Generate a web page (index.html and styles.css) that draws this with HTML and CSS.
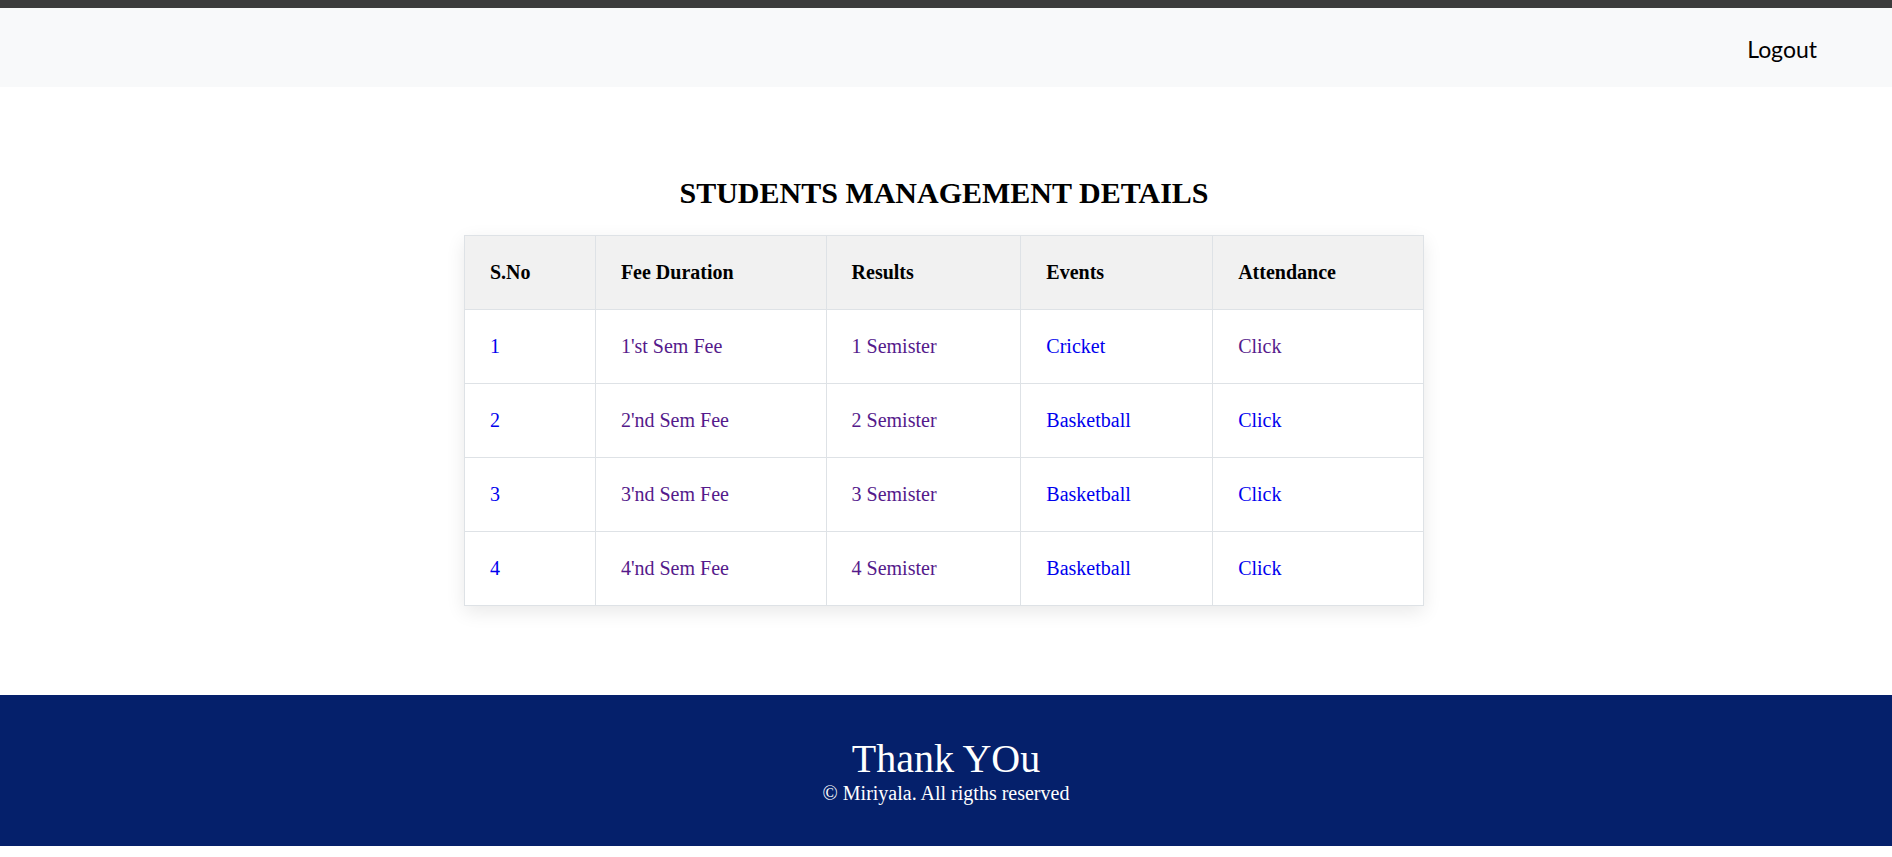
FILE: index.html
```html
<!DOCTYPE html>
<html lang="en">
<head>
<meta charset="utf-8">
<title>Students Management Details</title>
<link rel="stylesheet" href="styles.css">
</head>
<body>
<div class="topbar"></div>
<nav class="navbar">
  <a class="logout" href="#">Logout</a>
</nav>
<main class="content">
  <h2 class="title">STUDENTS MANAGEMENT DETAILS</h2>
  <table class="grid">
    <colgroup>
      <col class="c1"><col class="c2"><col class="c3"><col class="c4"><col class="c5">
    </colgroup>
    <thead>
      <tr><th>S.No</th><th>Fee Duration</th><th>Results</th><th>Events</th><th>Attendance</th></tr>
    </thead>
    <tbody>
      <tr><td><a class="lnk" href="#">1</a></td><td><a class="lnk visited" href="#">1'st Sem Fee</a></td><td><a class="lnk visited" href="#">1 Semister</a></td><td><a class="lnk" href="#">Cricket</a></td><td><a class="lnk visited" href="#">Click</a></td></tr>
      <tr><td><a class="lnk" href="#">2</a></td><td><a class="lnk visited" href="#">2'nd Sem Fee</a></td><td><a class="lnk visited" href="#">2 Semister</a></td><td><a class="lnk" href="#">Basketball</a></td><td><a class="lnk" href="#">Click</a></td></tr>
      <tr><td><a class="lnk" href="#">3</a></td><td><a class="lnk visited" href="#">3'nd Sem Fee</a></td><td><a class="lnk visited" href="#">3 Semister</a></td><td><a class="lnk" href="#">Basketball</a></td><td><a class="lnk" href="#">Click</a></td></tr>
      <tr><td><a class="lnk" href="#">4</a></td><td><a class="lnk visited" href="#">4'nd Sem Fee</a></td><td><a class="lnk visited" href="#">4 Semister</a></td><td><a class="lnk" href="#">Basketball</a></td><td><a class="lnk" href="#">Click</a></td></tr>
    </tbody>
  </table>
</main>
<footer class="footer">
  <div class="thanks">Thank YOu</div>
  <div class="copy">© Miriyala. All rigths reserved</div>
</footer>
</body>
</html>
```
FILE: styles.css
```css
html, body {
  margin: 0;
  padding: 0;
  background: #ffffff;
  font-family: "Liberation Serif", "Times New Roman", serif;
}

.topbar {
  height: 8px;
  background: #3c3c3c;
}

.navbar {
  height: 79px;
  background: #f8f9fa;
  display: flex;
  justify-content: flex-end;
  align-items: center;
  padding-right: 75px;
}

.logout {
  font-family: "Lato", "Open Sans", sans-serif;
  font-size: 23px;
  color: #000;
  text-decoration: none;
  margin-top: 2px;
}

.content {
  padding-top: 89px;
  padding-bottom: 89px;
  padding-right: 4px;
}

.title {
  margin: 0 0 25px;
  text-align: center;
  font-size: 30px;
  font-weight: bold;
  line-height: normal;
  color: #000;
}

.grid {
  margin: 0 auto;
  width: 960px;
  border-collapse: collapse;
  box-shadow: 0 6px 18px rgba(0, 0, 0, 0.09);
  background: #fff;
}

.c1 { width: 131px; }
.c2 { width: 231px; }
.c3 { width: 195px; }
.c4 { width: 192px; }
.c5 { width: 211px; }

.grid th,
.grid td {
  border: 1px solid #dee2e6;
  padding: 25px 25px;
  text-align: left;
  font-size: 20px;
  line-height: normal;
}

.grid th {
  background: #f1f1f1;
  font-weight: bold;
  color: #000;
}

.lnk {
  color: #0000ee;
  text-decoration: none;
}

.lnk.visited {
  color: #551a8b;
}

.footer {
  background: #05206b;
  color: #fff;
  text-align: center;
  padding: 40px 0 41px;
  margin-bottom: 10px;
}

.thanks {
  font-size: 40px;
  line-height: normal;
}

.copy {
  font-size: 20px;
  line-height: normal;
}
```
